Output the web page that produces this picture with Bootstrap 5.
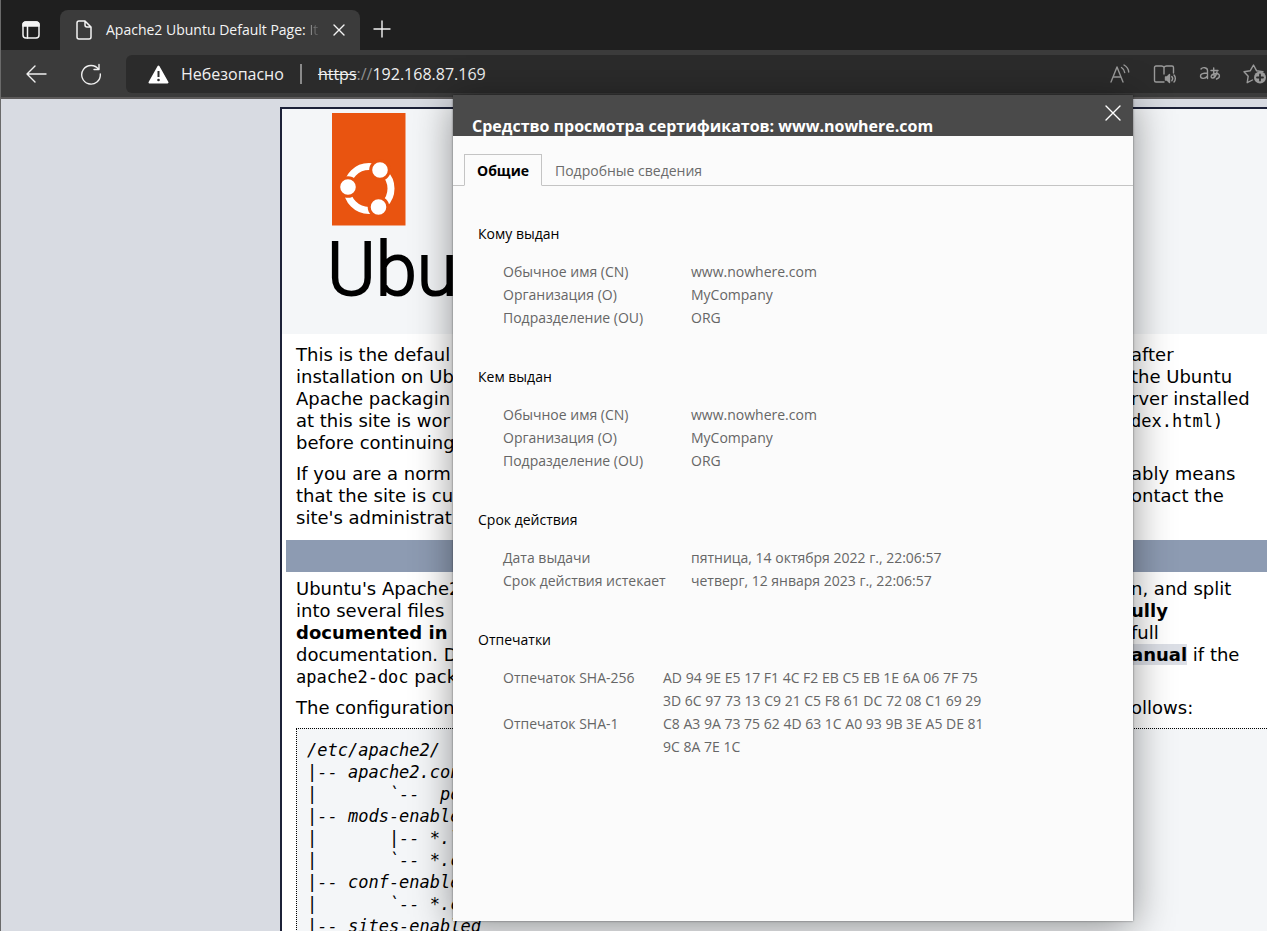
<!DOCTYPE html>
<html lang="ru">
<head>
<meta charset="utf-8">
<meta name="viewport" content="width=device-width, initial-scale=1">
<title>Apache2 Ubuntu Default Page: It works</title>
<link href="https://cdn.jsdelivr.net/npm/bootstrap@5.3.0/dist/css/bootstrap.min.css" rel="stylesheet">
<style>
body { font-family: "Open Sans", "Noto Sans", sans-serif; font-size: 14px; color: #000; background: #d8dbe2; }
.browser { border-left: 1px solid #6a6a6a; }
.ico { fill: none; stroke: currentColor; stroke-linecap: round; stroke-linejoin: round; display: block; }
.plain { background: none; border: 0; padding: 0; color: inherit; }
.tabstrip { background: #1f1f1f; height: 50px; padding-left: 20px; color: #f4f4f4; }
.page-tab { background: #3b3b3b; height: 40px; width: 300px; border-radius: 8px 8px 0 0; margin-left: 19px; padding: 0 14px 0 16px; }
.page-tab-title { font-size: 14px; line-height: 20px; margin-left: 14px; }
.fade-end { background: linear-gradient(90deg, #9a9a9a, #555); -webkit-background-clip: text; background-clip: text; color: transparent; }
.toolbar { background: #3b3b3b; height: 49px; border-bottom: 2px solid #5c5a5a; padding: 5px 0 4px 24px; color: #f0f0f0; }
.address { background: #2b2b2b; height: 38px; border-radius: 6px 0 0 6px; margin-left: 24px; padding-left: 22px; font-size: 16px; }
.address input { width: 100%; font-size: 16px; outline: 0; }
.divider { width: 2px; height: 20px; background: #8a8a8a; margin: 0 16px; }
.dim { color: #8e8e8e; }
.url-icons { color: #9a9a9a; gap: 22px; }

.viewport { background: #d8dbe2; padding: 8px 0 0 279px; }
.site { background: #fff; border: 2px solid #1c2138; border-width: 2px 0 0 2px; font-family: "DejaVu Sans", sans-serif; font-size: 18px; line-height: 22px; }
.site-head { background: #f4f6f8; height: 225px; padding: 4px 0 0 50px; }
.wordmark { font-family: Roboto, "Open Sans", sans-serif; font-weight: 300; font-size: 74px; line-height: 88px; margin-left: -5px; -webkit-text-stroke: 2px #000; }
.site-text { display: flow-root; padding: 10px 0 0 14px; }
.site-text + .banner { margin-top: 2px; }
.banner { background: #8d9bb2; height: 32px; margin-left: 4px; }
.banner + .site-text { padding-top: 6px; }
/* Two visible strips of the page, left and right of the open dialog */
.strips { display: grid; grid-template-columns: 157px 1fr; column-gap: 678px; white-space: nowrap; margin-bottom: 9px; }
.strips > * { height: 22px; }
.site code, .site pre { font-family: "DejaVu Sans Mono", monospace; font-size: 17px; line-height: 22px; color: inherit; }
.site pre { background: #f4f6f8; border: 1px dotted #000; border-right: 0; padding: 10px 0 10px 10px; font-style: italic; margin: 0; }
.site a { color: #000; text-decoration: none; font-weight: bold; background: #dcdfe6; }

.cert { left: 452px; top: 95px; width: 680px; height: 826px; background: #fbfbfb; box-shadow: 0 0 2px rgba(0,0,0,.5), 0 6px 38px rgba(0,0,0,.42); }
.cert-head { background: #4a4a4a; height: 41px; color: #fff; padding: 10px 12px 0 19px; }
.cert-title { font-size: 16px; line-height: 24px; font-weight: 700; margin: 9px 0 0; }
.cert-tabs { padding: 18px 0 0 11px; border-bottom: 1px solid #c4c4c4; }
.cert-tabs .nav-link { height: 32px; border-radius: 0; border: 1px solid transparent; padding: 0 12px; color: #6b6b6b; font-size: 14px; line-height: 32px; }
.cert-tabs .nav-link.active { border-color: #c4c4c4 #c4c4c4 #fbfbfb; background: #fbfbfb; color: #000; font-weight: 700; }
.cert-body { padding: 36px 25px 0; }
.cert-body h2 { font-size: 14px; line-height: 24px; font-weight: 400; margin: 0 0 14px; }
.cert-body dl { display: grid; grid-template-columns: 188px 1fr; line-height: 23px; color: #666; margin: 0 0 36px 25px; }
.cert-body dl.prints { grid-template-columns: 160px 1fr; }
.cert-body dt { font-weight: 400; }
.cert-body dd { margin: 0; }
</style>
</head>
<body class="vh-100 overflow-hidden">
<div class="browser position-relative vh-100 overflow-hidden">
  <header>
    <div class="tabstrip d-flex align-items-end">
      <button class="plain align-self-center pt-2" aria-label="Вкладки">
        <svg class="ico" width="20" height="22" viewBox="0 -2 20 22" stroke-width="1.5"><rect x="2" y="2" width="16" height="16" rx="3"/><path d="M2 6V5a3 3 0 0 1 3-3h10a3 3 0 0 1 3 3v1z" fill="currentColor"/><path d="M6.500 6v12"/></svg>
      </button>
      <div class="page-tab d-flex align-items-center">
        <svg class="ico flex-shrink-0" width="16" height="20" viewBox="0 0 16 20" stroke-width="1.5"><path d="M3 1h6l6 6v10a2 2 0 0 1-2 2H3a2 2 0 0 1-2-2V3a2 2 0 0 1 2-2zM9 1v4a2 2 0 0 0 2 2h4"/></svg>
        <div class="page-tab-title text-nowrap">Apache2 Ubuntu Default Page: <span class="fade-end">It</span></div>
        <button class="plain ms-auto" aria-label="Закрыть вкладку"><svg class="ico" width="14" height="14" viewBox="0 0 14 14" stroke-width="1.4"><path d="M2 2l10 10M12 2L2 12"/></svg></button>
      </div>
      <button class="plain align-self-center ms-2 ps-1 pt-2" aria-label="Новая вкладка"><svg class="ico" width="20" height="20" viewBox="0 0 20 20" stroke-width="1.4"><path d="M10 2v16M2 10h16"/></svg></button>
    </div>
    <div class="toolbar d-flex align-items-center">
      <button class="plain" aria-label="Назад"><svg class="ico" width="22" height="20" viewBox="0 0 22 20" stroke-width="1.4"><path d="M21 10H2M10 2L2 10l8 8"/></svg></button>
      <button class="plain ms-4 ps-2" aria-label="Обновить"><svg class="ico" width="23" height="22" viewBox="-1 0 23 22" stroke-width="1.4"><path d="M18.700 6.500A9.300 9.300 0 1 0 20.300 11M19 1.500v5h-5"/></svg></button>
      <div class="address d-flex align-items-center flex-grow-1">
        <svg width="21" height="19" viewBox="0 0 21 19" class="flex-shrink-0"><path d="M10.500 1.500L19.500 17.500H1.500z" fill="#fff" stroke="#fff" stroke-width="2" stroke-linejoin="round"/><path d="M10.500 6v6" stroke="#2b2b2b" stroke-width="2"/><circle cx="10.500" cy="15" r="1.300" fill="#2b2b2b"/></svg>
        <span class="ms-2 ps-1">Небезопасно</span>
        <span class="divider flex-shrink-0"></span>
        <label for="url" class="text-nowrap"><s>https</s><span class="dim">://</span></label>
        <input id="url" class="plain" type="text" value="192.168.87.169">
        <div class="url-icons d-flex align-items-center flex-shrink-0">
          <button class="plain" aria-label="Прочесть вслух"><svg class="ico" width="22" height="20" viewBox="0 0 22 20" stroke-width="1.400"><path d="M2 18L8 3l6 15M4 13h8M12.500 3.500c2 1.200 3 2.800 3.200 5M15 1c3 1.700 4.500 4 4.700 7"/></svg></button>
          <button class="plain" aria-label="Иммерсивное чтение"><svg class="ico" width="24" height="20" viewBox="0 0 24 20" stroke-width="1.400"><path d="M11 10V3.500C10.500 2.500 9.500 2 8.500 2H3a1.500 1.500 0 0 0-1.500 1.500v13A1.500 1.500 0 0 0 3 18h8M11 3.500C11.500 2.500 12.500 2 13.500 2H19a1.500 1.500 0 0 1 1.500 1.500V9M18.800 12.500c1 1.200 1 3 0 4.200M21 11c1.800 2 1.800 5.200 0 7"/><path d="M12.500 13h1.500l2.500-2.500v8L14 16h-1.500z" fill="currentColor"/></svg></button>
          <button class="plain" aria-label="Перевести"><svg class="ico" width="22" height="20" viewBox="0 0 22 20" stroke-width="1.400"><path d="M2 5c1.500-2 6.500-2 6.500 1.500v8M8.500 9c-3 0-7 .3-7 3s4.500 3.500 7 0M12 6.500h7M14.700 4c-.2 4 0 7 .8 9.500M18 8c-.7 3-2.500 6-4.500 6s-2.500-4 3.500-4.500c4.500-.3 4.500 4.500.5 5.500"/></svg></button>
          <button class="plain" aria-label="Добавить в избранное"><svg class="ico" width="24" height="22" viewBox="0 0 24 22" stroke-width="1.400"><path d="M9.500 17l-5.300 2.700 1-6.500L1 8.700l6.300-1L10.500 2l3 5.700 6.500 1"/><circle cx="17" cy="14.500" r="6" fill="currentColor" stroke="none"/><path d="M17 11.500v6M14 14.500h6" stroke="#2b2b2b" stroke-width="1.800"/></svg></button>
        </div>
      </div>
    </div>
  </header>

  <main class="viewport">
    <article class="site" lang="en">
      <div class="site-head">
        <svg class="d-block" width="74" height="113" viewBox="0 0 74 113" aria-label="Ubuntu">
          <rect width="73.500" height="112.500" fill="#e95410"/>
          <circle cx="37" cy="75.500" r="22" fill="none" stroke="#fff" stroke-width="7"/>
          <g fill="#fff" stroke="#e95410" stroke-width="3"><circle cx="48" cy="57" r="9.300"/><circle cx="16" cy="74" r="9.300"/><circle cx="46.500" cy="94" r="9.300"/></g>
        </svg>
        <div class="wordmark">Ubu</div>
      </div>
      <div class="site-text">
        <div class="strips">
          <span>This is the defaul</span><span>after</span>
          <span>installation on Ub</span><span>the Ubuntu</span>
          <span>Apache packagin</span><span>rver installed</span>
          <span>at this site is wor</span><span><code>dex.html)</code></span>
          <span>before continuing</span><span></span>
        </div>
        <div class="strips">
          <span>If you are a norm</span><span>ably means</span>
          <span>that the site is cu</span><span>ontact the</span>
          <span>site's administrat</span><span></span>
        </div>
      </div>
      <div class="banner"></div>
      <div class="site-text">
        <div class="strips">
          <span>Ubuntu's Apache2</span><span>n, and split</span>
          <span>into several files</span><b>ully</b>
          <b>documented in</b><span>full</span>
          <span>documentation. D</span><span><a href="#manual">anual</a> if the</span>
          <span><code>apache2-doc</code> pack</span><span></span>
        </div>
        <div class="strips">
          <span>The configuration</span><span>ollows:</span>
        </div>
        <pre>/etc/apache2/
|-- apache2.con
|       `--  po
|-- mods-enable
|       |-- *.l
|       `-- *.c
|-- conf-enable
|       `-- *.c
|-- sites-enabled</pre>
      </div>
    </article>
  </main>

  <section class="cert position-absolute" role="dialog" aria-labelledby="cert-title">
    <div class="cert-head d-flex justify-content-between align-items-start">
      <h1 class="cert-title" id="cert-title">Средство просмотра сертификатов: www.nowhere.com</h1>
      <button class="plain" aria-label="Закрыть"><svg class="ico" width="16" height="16" viewBox="0 0 16 16" stroke-width="1.400"><path d="M1 1l14 14M15 1L1 15"/></svg></button>
    </div>
    <div class="cert-tabs nav nav-tabs" role="tablist">
      <button class="nav-link active" role="tab" aria-selected="true">Общие</button>
      <button class="nav-link" role="tab" aria-selected="false">Подробные сведения</button>
    </div>
    <div class="cert-body">
      <h2>Кому выдан</h2>
      <dl><dt>Обычное имя (CN)</dt><dd>www.nowhere.com</dd><dt>Организация (O)</dt><dd>MyCompany</dd><dt>Подразделение (OU)</dt><dd>ORG</dd></dl>
      <h2>Кем выдан</h2>
      <dl><dt>Обычное имя (CN)</dt><dd>www.nowhere.com</dd><dt>Организация (O)</dt><dd>MyCompany</dd><dt>Подразделение (OU)</dt><dd>ORG</dd></dl>
      <h2>Срок действия</h2>
      <dl><dt>Дата выдачи</dt><dd>пятница, 14 октября 2022 г., 22:06:57</dd><dt>Срок действия истекает</dt><dd>четверг, 12 января 2023 г., 22:06:57</dd></dl>
      <h2>Отпечатки</h2>
      <dl class="prints"><dt>Отпечаток SHA-256</dt><dd>AD 94 9E E5 17 F1 4C F2 EB C5 EB 1E 6A 06 7F 75<br>3D 6C 97 73 13 C9 21 C5 F8 61 DC 72 08 C1 69 29</dd><dt>Отпечаток SHA-1</dt><dd>C8 A3 9A 73 75 62 4D 63 1C A0 93 9B 3E A5 DE 81<br>9C 8A 7E 1C</dd></dl>
    </div>
  </section>
</div>
<script src="https://cdn.jsdelivr.net/npm/bootstrap@5.3.0/dist/js/bootstrap.bundle.min.js"></script>
</body>
</html>
